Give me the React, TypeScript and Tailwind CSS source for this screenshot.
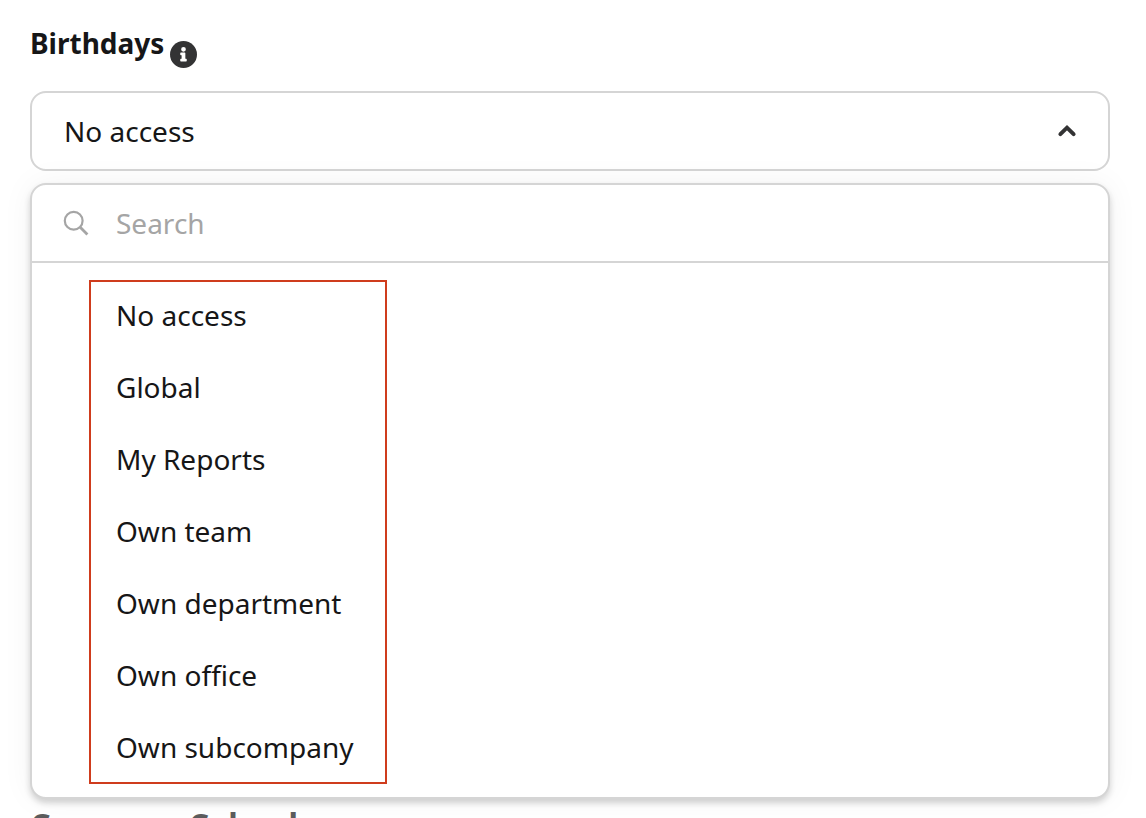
import { useState } from "react";

const options = [
  "No access",
  "Global",
  "My Reports",
  "Own team",
  "Own department",
  "Own office",
  "Own subcompany",
];

function InfoIcon() {
  return (
    <svg viewBox="0 0 512 512" className="size-[27px]" aria-hidden="true">
      <circle cx="256" cy="256" r="256" fill="#333334" />
      <path
        d="M256 112a45 45 0 1 1 0 90 45 45 0 0 1 0-90zm62 264c0 7-5 13-13 13h-98c-7 0-13-6-13-13v-26c0-7 6-13 13-13h13v-68h-13c-7 0-13-6-13-13v-26c0-7 6-13 13-13h71c7 0 13 6 13 13v107h14c8 0 13 6 13 13v26z"
        fill="#fff"
      />
    </svg>
  );
}

function ChevronIcon() {
  return (
    <svg
      viewBox="0 0 20 14"
      className="pointer-events-none absolute right-[33px] h-[14px] w-5"
      fill="none"
      stroke="#333334"
      strokeWidth="4"
      strokeLinecap="round"
      strokeLinejoin="miter"
      aria-hidden="true"
    >
      <path d="M3.4 10.2 10 3.7l6.6 6.5" />
    </svg>
  );
}

function SearchIcon() {
  return (
    <svg
      viewBox="0 0 26 26"
      className="size-[26px] shrink-0"
      fill="none"
      stroke="#a5a5a5"
      strokeWidth="2.2"
      aria-hidden="true"
    >
      <circle cx="10.7" cy="10.7" r="8.9" />
      <path d="m17.2 17.2 7.2 7.2" strokeWidth="2.8" />
    </svg>
  );
}

export default function App() {
  const [selected, setSelected] = useState("No access");
  const [query, setQuery] = useState("");

  const visible = options.filter((option) =>
    option.toLowerCase().includes(query.toLowerCase())
  );

  return (
    <main className="h-screen overflow-hidden bg-white pt-[23px] pr-9 pl-[30px] font-['Noto_Sans',sans-serif] text-[28px] leading-10 text-[#161617]">
      {/* Label */}
      <div className="flex h-[68px] items-start gap-1.5">
        <label htmlFor="birthdays" className="font-bold">
          Birthdays
        </label>
        <button type="button" aria-label="About birthdays" className="mt-[18px]">
          <InfoIcon />
        </button>
      </div>

      {/* Closed control */}
      <div className="relative flex items-center">
        <select
          id="birthdays"
          value={selected}
          onChange={(e) => setSelected(e.target.value)}
          className="h-20 w-full appearance-none rounded-2xl border-2 border-[#d5d5d5] bg-white px-8"
        >
          {options.map((option) => (
            <option key={option}>{option}</option>
          ))}
        </select>
        <ChevronIcon />
      </div>

      {/* Open menu */}
      <div className="relative z-10 mt-3 rounded-2xl border-2 border-[#d5d5d5] bg-white pb-[13px] shadow-[0_4px_6px_rgba(0,0,0,0.17),0_0_32px_rgba(0,0,0,0.05)]">
        <div className="flex h-[78px] items-center gap-[27px] border-b-2 border-[#d5d5d5] px-[31px]">
          <SearchIcon />
          <input
            type="text"
            aria-label="Search"
            placeholder="Search"
            value={query}
            onChange={(e) => setQuery(e.target.value)}
            className="min-w-0 flex-1 bg-transparent outline-none placeholder:text-[#a5a5a5]"
          />
        </div>
        <ul
          role="listbox"
          aria-label="Birthdays"
          className="mt-[17px] ml-[57px] w-[298px] outline-2 -outline-offset-2 outline-[#cf3c1d]"
        >
          {visible.map((option) => (
            <li
              key={option}
              role="option"
              aria-selected={option === selected}
              onClick={() => setSelected(option)}
              className="flex h-[72px] cursor-pointer items-center pb-0.5 pl-[27px]"
            >
              {option}
            </li>
          ))}
        </ul>
      </div>

      <h2 className="mt-1.5 text-[32px] font-bold text-[#5c5c5d]">
        Company Calendar
      </h2>
    </main>
  );
}
